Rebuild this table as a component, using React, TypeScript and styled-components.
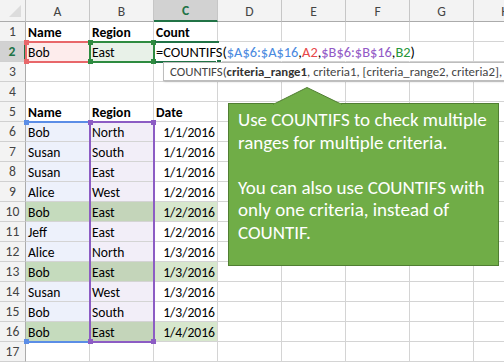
import React from "react"
import styled, { createGlobalStyle } from "styled-components"

const GlobalStyle = createGlobalStyle`
  html, body {
    margin: 0;
    padding: 0;
    background: #ffffff;
  }
  body {
    font-family: Carlito, Lato, "Liberation Sans", sans-serif;
  }
`

const COLS = ["A", "B", "C", "D", "E", "F", "G", "H"]
const HEAD_W = 26
const HEAD_H = 22
const COL_W = 64
const ROW_H = 20
const ROW_COUNT = 17

const GRID = "#d4d4d4"
const ACTIVE = "#217346"

const colLine = (c: number) => HEAD_W + c * COL_W - 1
const rowLine = (r: number) => HEAD_H + (r - 1) * ROW_H - 1

type Range = { c1: number; r1: number; c2: number; r2: number }

// outer box of a cell range, drawn over its surrounding gridlines
const box = ({ c1, r1, c2, r2 }: Range) => ({
  $x: colLine(c1),
  $y: rowLine(r1),
  $w: colLine(c2 + 1) - colLine(c1) + 2,
  $h: rowLine(r2 + 1) - rowLine(r1) + 2
})

type CellData = { text?: string; bg?: string; bold?: boolean; right?: boolean }

const BLUE_FILL = "#edf1fb"
const PURPLE_FILL = "#f2eef8"
const HIT = ["#c5dbbd", "#c4d5ba", "#d7e7cd"]

const records = [
  ["Bob", "North", "1/1/2016"],
  ["Susan", "South", "1/1/2016"],
  ["Susan", "East", "1/1/2016"],
  ["Alice", "West", "1/2/2016"],
  ["Bob", "East", "1/2/2016"],
  ["Jeff", "East", "1/2/2016"],
  ["Alice", "North", "1/3/2016"],
  ["Bob", "East", "1/3/2016"],
  ["Susan", "West", "1/3/2016"],
  ["Bob", "South", "1/3/2016"],
  ["Bob", "East", "1/4/2016"]
]

function buildRows(): CellData[][] {
  const rows: CellData[][] = []
  for (let r = 1; r <= ROW_COUNT; r++) rows.push(COLS.map(() => ({})))
  rows[0][0] = { text: "Name", bold: true }
  rows[0][1] = { text: "Region", bold: true }
  rows[0][2] = { text: "Count", bold: true }
  rows[1][0] = { text: "Bob", bg: "#fdecec" }
  rows[1][1] = { text: "East", bg: "#e8f1e8" }
  rows[4][0] = { text: "Name", bold: true }
  rows[4][1] = { text: "Region", bold: true }
  rows[4][2] = { text: "Date", bold: true }
  records.forEach((rec, i) => {
    const hit = rec[0] === "Bob" && rec[1] === "East"
    rows[5 + i][0] = { text: rec[0], bg: hit ? HIT[0] : BLUE_FILL }
    rows[5 + i][1] = { text: rec[1], bg: hit ? HIT[1] : PURPLE_FILL }
    rows[5 + i][2] = { text: rec[2], right: true, bg: hit ? HIT[2] : undefined }
  })
  return rows
}

function App() {
  const rows = buildRows()
  return (
    <>
      <GlobalStyle />
      <Sheet>
        <Corner>
          <svg width="14" height="14" viewBox="0 0 14 14">
            <polygon points="13,1 13,13 1,13" fill="#dcdcdc" />
          </svg>
        </Corner>
        {COLS.map((c, i) => (
          <ColHead key={c} $active={i === 2}>
            {c}
          </ColHead>
        ))}
        {rows.map((row, ri) => (
          <React.Fragment key={ri}>
            <RowHead $active={ri === 1}>{ri + 1}</RowHead>
            {row.map((cell, ci) =>
              ri === 1 && ci === 2 ? (
                <Cell key={ci}>
                  <EditText>
                    =COUNTIFS(<Ref $c="#4a8ae0">$A$6:$A$16</Ref>,
                    <Ref $c="#e8474a">A2</Ref>,<Ref $c="#9259c6">$B$6:$B$16</Ref>,
                    <Ref $c="#27963a">B2</Ref>)
                  </EditText>
                </Cell>
              ) : (
                <Cell
                  key={ci}
                  $bg={cell.bg}
                  $bold={cell.bold}
                  $right={cell.right}
                  $hideRight={ri === 1 && ci >= 2 && ci <= 5}
                >
                  {cell.text}
                </Cell>
              )
            )}
          </React.Fragment>
        ))}

        <RefBox {...box({ c1: 0, r1: 6, c2: 0, r2: 16 })} $color="#5b8de6" $sides="top-bottom">
          <Handle $color="#5b8de6" $v="top" $hz="left" />
          <Handle $color="#5b8de6" $v="bottom" $hz="left" />
        </RefBox>
        <RefBox {...box({ c1: 1, r1: 6, c2: 1, r2: 16 })} $color="#8c5cc4">
          <Handle $color="#8c5cc4" $v="top" $hz="left" />
          <Handle $color="#8c5cc4" $v="top" $hz="right" />
          <Handle $color="#8c5cc4" $v="bottom" $hz="left" />
          <Handle $color="#8c5cc4" $v="bottom" $hz="right" />
        </RefBox>
        <RefBox {...box({ c1: 0, r1: 2, c2: 0, r2: 2 })} $color="#e8676a">
          <Handle $color="#e8676a" $v="top" $hz="left" />
          <Handle $color="#e8676a" $v="bottom" $hz="left" />
        </RefBox>
        <RefBox {...box({ c1: 1, r1: 2, c2: 1, r2: 2 })} $color="#2e8b40">
          <Handle $color="#2e8b40" $v="top" $hz="left" />
          <Handle $color="#2e8b40" $v="top" $hz="right" />
          <Handle $color="#2e8b40" $v="bottom" $hz="left" />
          <Handle $color="#2e8b40" $v="bottom" $hz="right" />
        </RefBox>
        <ActiveCell {...box({ c1: 2, r1: 2, c2: 2, r2: 2 })}>
          <FillHandle />
        </ActiveCell>

        <Tooltip>
          COUNTIFS(<b>criteria_range1</b>, criteria1, [criteria_range2, criteria2], ...)
        </Tooltip>

        <Callout>
          <Pointer width="72" height="19" viewBox="0 0 72 19">
            <polygon points="1,18.5 35,1.5 70,18.5" fill="#70ad47" stroke="#507e32" strokeWidth="1" />
            <rect x="1.5" y="17.5" width="68" height="2" fill="#70ad47" />
          </Pointer>
          <p>Use COUNTIFS to check multiple ranges for multiple criteria.</p>
          <p>You can also use COUNTIFS with only one criteria, instead of COUNTIF.</p>
        </Callout>
      </Sheet>
    </>
  )
}

export default App

const Sheet = styled.div`
  position: relative;
  width: 504px;
  height: 363px;
  overflow: hidden;
  display: grid;
  grid-template-columns: ${HEAD_W}px repeat(${COLS.length}, ${COL_W}px);
  grid-template-rows: ${HEAD_H}px repeat(${ROW_COUNT}, ${ROW_H}px);
  background: #ffffff;
  font-size: 13.6px;
  color: #000000;
`

const Corner = styled.div`
  box-sizing: border-box;
  background: #f3f3f3;
  border-right: 1px solid #c6c6c6;
  border-bottom: 1px solid #ababab;
  display: flex;
  align-items: flex-end;
  justify-content: flex-end;
  padding: 0 3px 3px 0;
`

const ColHead = styled.div<{ $active?: boolean }>`
  box-sizing: border-box;
  background: ${(p) => (p.$active ? "#d2d2d2" : "#f3f3f3")};
  color: ${(p) => (p.$active ? ACTIVE : "#444444")};
  font-weight: ${(p) => (p.$active ? 700 : 400)};
  border-right: 1px solid #c6c6c6;
  border-bottom: ${(p) => (p.$active ? `2px solid ${ACTIVE}` : "1px solid #ababab")};
  display: flex;
  align-items: center;
  justify-content: center;
  padding-top: 1px;
  font-size: 13.6px;
`

const RowHead = styled.div<{ $active?: boolean }>`
  box-sizing: border-box;
  background: ${(p) => (p.$active ? "#d2d2d2" : "#f3f3f3")};
  color: ${(p) => (p.$active ? ACTIVE : "#444444")};
  font-weight: ${(p) => (p.$active ? 700 : 400)};
  border-right: ${(p) => (p.$active ? `2px solid ${ACTIVE}` : "1px solid #ababab")};
  border-bottom: 1px solid #d0d0d0;
  display: flex;
  align-items: center;
  justify-content: center;
  font-size: 13.6px;
`

const Cell = styled.div<{ $bg?: string; $bold?: boolean; $right?: boolean; $hideRight?: boolean }>`
  box-sizing: border-box;
  background: ${(p) => p.$bg || "#ffffff"};
  border-right: 1px solid ${(p) => (p.$hideRight ? "transparent" : GRID)};
  border-bottom: 1px solid ${GRID};
  font-weight: ${(p) => (p.$bold ? 700 : 400)};
  display: flex;
  align-items: center;
  justify-content: ${(p) => (p.$right ? "flex-end" : "flex-start")};
  padding: 1px 2px 0 2px;
  white-space: nowrap;
  overflow: visible;
`

const EditText = styled.span`
  position: relative;
  z-index: 1;
  background: #ffffff;
  font-size: 14.4px;
  line-height: 18px;
  padding-right: 4px;
`

const Ref = styled.span<{ $c: string }>`
  color: ${(p) => p.$c};
`

type BoxProps = { $x: number; $y: number; $w: number; $h: number }

const RefBox = styled.div<BoxProps & { $color: string; $sides?: string }>`
  position: absolute;
  left: ${(p) => p.$x}px;
  top: ${(p) => p.$y}px;
  width: ${(p) => p.$w}px;
  height: ${(p) => p.$h}px;
  box-shadow: ${(p) =>
    p.$sides === "top-bottom"
      ? `inset 0 2px 0 ${p.$color}, inset 0 -2px 0 ${p.$color}`
      : `inset 0 0 0 2px ${p.$color}`};
  pointer-events: none;
  z-index: 2;
`

const Handle = styled.div<{ $color: string; $v: "top" | "bottom"; $hz: "left" | "right" }>`
  position: absolute;
  ${(p) => p.$v}: -1px;
  ${(p) => p.$hz}: -1px;
  width: 5px;
  height: 5px;
  background: ${(p) => p.$color};
`

const ActiveCell = styled.div<BoxProps>`
  position: absolute;
  left: ${(p) => p.$x + 2}px;
  top: ${(p) => p.$y}px;
  width: ${(p) => p.$w - 2}px;
  height: ${(p) => p.$h}px;
  box-sizing: border-box;
  border-top: 2px solid ${ACTIVE};
  border-bottom: 2px solid ${ACTIVE};
  z-index: 3;
`

const FillHandle = styled.div`
  position: absolute;
  right: -3px;
  bottom: -4px;
  width: 6px;
  height: 6px;
  background: ${ACTIVE};
  border: 1px solid #ffffff;
  box-sizing: border-box;
`

const Tooltip = styled.div`
  position: absolute;
  left: 163px;
  top: 62px;
  height: 19px;
  padding: 0 6px;
  box-sizing: border-box;
  background: #ffffff;
  border: 1px solid #bdbdbd;
  box-shadow: 1px 1px 2px rgba(0, 0, 0, 0.15);
  color: #444444;
  font-size: 12.8px;
  line-height: 17px;
  white-space: nowrap;
  z-index: 4;

  b {
    font-weight: 700;
    color: #333333;
  }
`

const Callout = styled.div`
  position: absolute;
  left: 228px;
  top: 103px;
  width: 271px;
  height: 163px;
  box-sizing: border-box;
  background: #70ad47;
  border: 1px solid #507e32;
  color: #ffffff;
  font-size: 19px;
  line-height: 22.5px;
  padding: 5px 8px 0 9px;
  z-index: 5;

  p {
    margin: 0 0 22.5px 0;
  }
`

const Pointer = styled.svg`
  position: absolute;
  left: 43px;
  top: -18px;
`
